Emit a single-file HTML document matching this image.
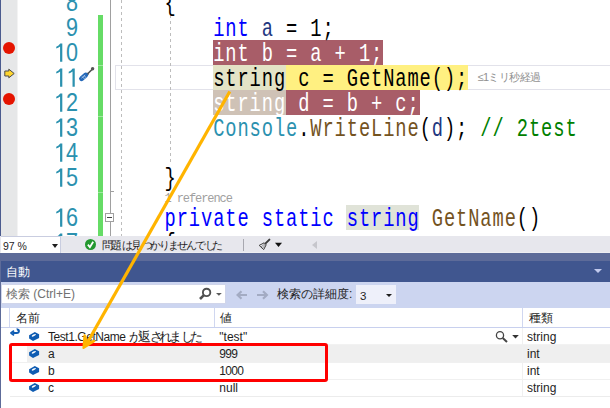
<!DOCTYPE html>
<html><head><meta charset="utf-8">
<style>
*{margin:0;padding:0;box-sizing:border-box}
html,body{width:610px;height:408px;overflow:hidden;background:#fff;position:relative;font-family:"Liberation Sans",sans-serif}
.a{position:absolute}
.one{display:inline-block;width:14.46px;height:26px;vertical-align:top}
.one svg{display:block}
.ln{position:absolute;left:20px;width:58px;text-align:right;color:#2b91af;font-size:26px;line-height:26px;height:25px;transform:scaleX(0.83);transform-origin:right}
.code{position:absolute;left:116px;font-family:"Liberation Mono",monospace;font-size:25px;letter-spacing:1.19px;line-height:29px;height:25px;white-space:pre;color:#000;transform:scaleX(0.75);transform-origin:0 0}
.kw{color:#0000ff}.var{color:#1f377f}.ty{color:#2b91af}.me{color:#74531f}.cm{color:#008000}
.hl{position:absolute;height:25px}
.ui{font-size:12px;line-height:17px;white-space:pre;color:#1e1e1e}
.row{position:absolute;left:10px;width:600px;height:17px;border-bottom:1px solid #f0f0f0}
.cube{position:absolute;left:29px;width:10px;height:9px}
</style></head><body>
<!-- editor -->
<div class="a" style="left:0;top:0;width:1px;height:236px;background:#4b5b8e"></div>
<div class="a" style="left:1px;top:0;width:16px;height:236px;background:#e6e7e8"></div><div class="a" style="left:17px;top:0;width:1px;height:236px;background:#f3f3f3"></div>

<div class="ln" style="top:-11px">8</div>
<div class="ln" style="top:14px">9</div>
<div class="ln" style="top:39px"><span class="one"><svg width="14.46" height="26" viewBox="0 0 14.46 26"><path d="M7.4 22.7V7.6Q5.2 9 2.8 9.6V7.8Q5.8 6.6 7.6 4.4H10.1V22.7Z" fill="#2b91af"/></svg></span>0</div>
<div class="ln" style="top:64px"><span class="one"><svg width="14.46" height="26" viewBox="0 0 14.46 26"><path d="M7.4 22.7V7.6Q5.2 9 2.8 9.6V7.8Q5.8 6.6 7.6 4.4H10.1V22.7Z" fill="#2b91af"/></svg></span><span class="one"><svg width="14.46" height="26" viewBox="0 0 14.46 26"><path d="M7.4 22.7V7.6Q5.2 9 2.8 9.6V7.8Q5.8 6.6 7.6 4.4H10.1V22.7Z" fill="#2b91af"/></svg></span></div>
<div class="ln" style="top:89px"><span class="one"><svg width="14.46" height="26" viewBox="0 0 14.46 26"><path d="M7.4 22.7V7.6Q5.2 9 2.8 9.6V7.8Q5.8 6.6 7.6 4.4H10.1V22.7Z" fill="#2b91af"/></svg></span>2</div>
<div class="ln" style="top:114px"><span class="one"><svg width="14.46" height="26" viewBox="0 0 14.46 26"><path d="M7.4 22.7V7.6Q5.2 9 2.8 9.6V7.8Q5.8 6.6 7.6 4.4H10.1V22.7Z" fill="#2b91af"/></svg></span>3</div>
<div class="ln" style="top:139px"><span class="one"><svg width="14.46" height="26" viewBox="0 0 14.46 26"><path d="M7.4 22.7V7.6Q5.2 9 2.8 9.6V7.8Q5.8 6.6 7.6 4.4H10.1V22.7Z" fill="#2b91af"/></svg></span>4</div>
<div class="ln" style="top:164px"><span class="one"><svg width="14.46" height="26" viewBox="0 0 14.46 26"><path d="M7.4 22.7V7.6Q5.2 9 2.8 9.6V7.8Q5.8 6.6 7.6 4.4H10.1V22.7Z" fill="#2b91af"/></svg></span>5</div>
<div class="ln" style="top:204px"><span class="one"><svg width="14.46" height="26" viewBox="0 0 14.46 26"><path d="M7.4 22.7V7.6Q5.2 9 2.8 9.6V7.8Q5.8 6.6 7.6 4.4H10.1V22.7Z" fill="#2b91af"/></svg></span>6</div>
<div class="ln" style="top:229px"><span class="one"><svg width="14.46" height="26" viewBox="0 0 14.46 26"><path d="M7.4 22.7V7.6Q5.2 9 2.8 9.6V7.8Q5.8 6.6 7.6 4.4H10.1V22.7Z" fill="#2b91af"/></svg></span>7</div>

<div class="a" style="left:98px;top:15px;width:5px;height:221px;background:#66dc66"></div><div class="a" style="left:98px;top:65px;width:5px;height:1px;background:#a0e8a0"></div><div class="a" style="left:98px;top:116px;width:5px;height:1px;background:#a0e8a0"></div><div class="a" style="left:98px;top:192px;width:5px;height:1px;background:#a0e8a0"></div>
<div class="a" style="left:110px;top:0;width:1px;height:213px;background:#a0a0a0"></div>
<div class="a" style="left:110px;top:191px;width:4px;height:1px;background:#a0a0a0"></div>
<div class="a" style="left:110px;top:222px;width:1px;height:14px;background:#a0a0a0"></div>
<div class="a" style="left:105px;top:213px;width:9px;height:9px;border:1px solid #a0a0a0;background:#fff"></div>
<div class="a" style="left:107px;top:217px;width:5px;height:1px;background:#444"></div>

<!-- current line box -->
<div class="a" style="left:115px;top:65px;width:495px;height:25px;border:1px solid #e2e2ea;border-right:none"></div>
<!-- indent guides -->
<div class="a" style="left:121px;top:0;width:1px;height:236px;background:repeating-linear-gradient(#bdbdbd 0 3px,transparent 3px 6px)"></div>
<div class="a" style="left:170px;top:15px;width:1px;height:150px;background:repeating-linear-gradient(#bdbdbd 0 3px,transparent 3px 6px)"></div>

<!-- highlights -->
<div class="hl" style="left:213px;top:40px;width:170px;background:#a85d68"></div>
<div class="hl" style="left:213px;top:65px;width:73px;background:#e3e3c6"></div>
<div class="hl" style="left:286px;top:65px;width:182px;background:#fff081"></div>
<div class="hl" style="left:213px;top:90px;width:73px;background:#cfc2b6"></div>
<div class="hl" style="left:286px;top:90px;width:134px;background:#a85d68"></div>
<div class="hl" style="left:346px;top:205px;width:73px;height:25px;background:#e0e3d8"></div>

<div class="code" style="top:-10px">    {</div>
<div class="code" style="top:15px">        <span class="kw">int</span> <span class="var">a</span> = 1;</div>
<div class="code" style="top:40px;color:#fff">        int b = a + 1;</div>
<div class="code" style="top:65px">        string c = GetName();</div>
<div class="code" style="top:90px;color:#fff">        string d = b + c;</div>
<div class="code" style="top:115px">        <span class="ty">Console</span>.<span class="me">WriteLine</span>(<span class="var">d</span>); <span class="cm">// 2test</span></div>
<div class="code" style="top:165px">    }</div>
<div class="a" style="left:164.5px;top:191.5px;font-family:'Liberation Mono',monospace;font-size:12px;letter-spacing:-1.08px;line-height:15px;color:#a0a0a0;white-space:pre">1 reference</div>
<div class="code" style="top:205px"><span class="kw">    private static string</span> <span class="me">GetName</span>()</div>
<div class="code" style="top:230px">    {</div>

<div class="a ui" style="left:477.5px;top:69px;font-size:11px;letter-spacing:-0.6px;color:#909090">≤1ミリ秒経過</div>

<!-- margin glyphs -->
<div class="a" style="left:3px;top:42px;width:12px;height:12px;border-radius:50%;background:#e51400"></div>
<div class="a" style="left:3px;top:93px;width:12px;height:12px;border-radius:50%;background:#e51400"></div>
<svg class="a" style="left:0;top:64px" width="20" height="20" viewBox="0 64 20 20"><path d="M4.8 71H8.8V69.2L14.2 73.5L8.8 77.8V76H4.8Z" fill="#ffd52e" stroke="#4a4a4a" stroke-width="1" stroke-linejoin="round"/></svg>
<svg class="a" style="left:78px;top:62px" width="22" height="22" viewBox="0 0 22 22"><path d="M9 12.5L15 6.5" stroke="#505050" stroke-width="1.6" stroke-linecap="round"/><path d="M7.8 13.4L10 11.4" stroke="#505050" stroke-width="2.6"/><circle cx="14.6" cy="6.8" r="1.7" fill="#555"/><path d="M3.6 16.6L7.6 13.2" stroke="#2468b8" stroke-width="5" stroke-linecap="round"/><path d="M4.2 14.6L6.6 17M5.8 13.4L8.1 15.6M3.4 16.2L7.2 13" stroke="#cfe0f5" stroke-width="0.7"/></svg>

<!-- status bar -->
<div class="a" style="left:0;top:236px;width:610px;height:17px;background:#e7e7ed;border-bottom:1px solid #eeeef2"></div>
<div class="a" style="left:1px;top:236px;width:60px;height:17px;background:#fff;border-top:1px solid #c9cde0;border-right:1px solid #c9cde0"></div>
<div class="a ui" style="left:3px;top:238px;font-size:10.5px;color:#1e1e1e">97 %</div>
<div class="a" style="left:52px;top:243.5px;width:0;height:0;border-left:3.5px solid transparent;border-right:3.5px solid transparent;border-top:4px solid #1e1e1e"></div>
<div class="a" style="left:85px;top:239px;width:11px;height:11px;border-radius:50%;background:#23982f"></div>
<svg class="a" style="left:85px;top:239px" width="11" height="11"><path d="M2.9 5.6L4.9 8.2L8.2 2.7" stroke="#fff" stroke-width="1.8" fill="none"/></svg>
<div class="a ui" style="left:101.5px;top:237px;font-size:10.5px"><span style="display:inline-block;width:9.4px">問</span><span style="display:inline-block;width:11.6px">題</span><span style="display:inline-block;width:8.4px">は</span><span style="display:inline-block;width:11.5px">見</span><span style="display:inline-block;width:7.4px">つ</span><span style="display:inline-block;width:9.4px">か</span><span style="display:inline-block;width:8.4px">り</span><span style="display:inline-block;width:9.4px">ま</span><span style="display:inline-block;width:9.5px">せ</span><span style="display:inline-block;width:8.4px">ん</span><span style="display:inline-block;width:10.4px">で</span><span style="display:inline-block;width:6.4px">し</span><span style="display:inline-block;width:7.3px">た</span></div>
<div class="a" style="left:243px;top:239px;width:1px;height:12px;background:#a8a8b0"></div>
<svg class="a" style="left:254px;top:236px" width="32" height="16" viewBox="0 0 32 16"><path d="M15.4 3.6L11.6 7.4" stroke="#3c3c3c" stroke-width="2" stroke-linecap="round"/><path d="M5.2 9.4L10.2 6.8L12.2 8.8L9.7 13.6Z" fill="none" stroke="#3c3c3c" stroke-width="1" stroke-linejoin="round"/><path d="M7 10.9L11 7.9M8.4 12.3L11.6 8.7" stroke="#6a6a6a" stroke-width="0.7"/><path d="M21 6.8H28L24.5 11Z" fill="#111"/></svg>
<div class="a" style="left:312px;top:240.5px;width:0;height:0;border-top:4px solid transparent;border-bottom:4px solid transparent;border-right:5px solid #c6c6cc"></div>

<!-- panel -->
<div class="a" style="left:0;top:253px;width:610px;height:8px;background:#5d6b99"></div>
<div class="a" style="left:0;top:253px;width:1px;height:155px;background:#5d6b99"></div>
<div class="a" style="left:1px;top:261px;width:609px;height:21px;background:#40568f"></div>
<div class="a ui" style="left:6px;top:263.5px;color:#fff;font-size:12px">自動</div>
<div class="a" style="left:594px;top:269px;width:0;height:0;border-left:4px solid transparent;border-right:4px solid transparent;border-top:4px solid #c2caee"></div>

<div class="a" style="left:1px;top:282px;width:609px;height:26px;background:#ccd5f0"></div>
<div class="a" style="left:1px;top:284px;width:225px;height:20px;background:#fff;border:1px solid #d0d5ea"></div>
<div class="a ui" style="left:6px;top:286px;color:#717171">検索 (Ctrl+E)</div>
<svg class="a" style="left:194px;top:284px" width="32" height="20" viewBox="0 0 32 20"><circle cx="12.6" cy="8.4" r="3.7" stroke="#505050" stroke-width="1.9" fill="none"/><path d="M9.9 11.1L6 15" stroke="#505050" stroke-width="2.6"/><path d="M22 9H27.8L24.9 11.8Z" fill="#5a5a5a"/></svg>
<svg class="a" style="left:230px;top:284px" width="44" height="22" viewBox="0 0 44 22"><path d="M17 11H8M11.5 7.2L7.6 11L11.5 14.8" stroke="#a3abc3" stroke-width="2.2" fill="none"/><path d="M27 11H36.5M33 7.2L36.9 11L33 14.8" stroke="#a3abc3" stroke-width="2.2" fill="none"/></svg>
<div class="a ui" style="left:277px;top:286px">検索の詳細度:</div>
<div class="a" style="left:356px;top:285px;width:40px;height:19px;background:#eef0fa"></div>
<div class="a ui" style="left:360px;top:287.5px;font-size:11.5px">3</div>
<div class="a" style="left:386px;top:294px;width:0;height:0;border-left:3px solid transparent;border-right:3px solid transparent;border-top:3px solid #1e1e1e"></div>

<!-- header -->
<div class="a" style="left:1px;top:308px;width:609px;height:20px;background:#fff;border-bottom:1px solid #c8d0ee"></div>
<div class="a" style="left:9px;top:308px;width:1px;height:19px;background:#d0d7f0"></div>
<div class="a" style="left:214px;top:308px;width:1px;height:19px;background:#d0d7f0"></div>
<div class="a" style="left:522px;top:308px;width:1px;height:19px;background:#d0d7f0"></div>
<div class="a ui" style="left:15.5px;top:310px;font-size:11.5px">名前</div>
<div class="a ui" style="left:220px;top:310px;font-size:11.5px">値</div>
<div class="a ui" style="left:528.5px;top:310px;font-size:11.5px">種類</div>

<!-- rows -->
<div class="a" style="left:10px;top:344px;width:600px;height:1px;background:#f2f2f2"></div>
<div class="a" style="left:27px;top:345px;width:583px;height:17px;background:#efefef"></div>
<div class="a" style="left:10px;top:362px;width:600px;height:1px;background:#f0f0f0"></div>
<div class="a" style="left:10px;top:379px;width:600px;height:1px;background:#f0f0f0"></div>
<div class="a" style="left:10px;top:396px;width:600px;height:1px;background:#ececec"></div>
<div class="a" style="left:522px;top:328px;width:1px;height:68px;background:#f0f0f0"></div>
<svg class="a" style="left:9px;top:327px" width="12" height="10" viewBox="0 0 12 10"><path d="M3.5 6H7.5Q10 6 10 4Q10 2.6 8 2.4" stroke="#0f5cb2" stroke-width="1.8" fill="none"/><path d="M5 3.6L2 6L5 8.4" stroke="#0f5cb2" stroke-width="1.8" fill="none" stroke-linejoin="round"/><path d="M7.3 1.3L9.6 2.2 8.2 4z" fill="#0f5cb2"/></svg>
<svg class="a" style="left:28px;top:331px" width="12" height="11" viewBox="0 0 12 11"><path d="M1.1 4.2L6.8 1 11.1 3.3V6.9L5 10 1.1 7.6Z" fill="#0f5cb2"/><ellipse cx="5.8" cy="4.3" rx="2.3" ry="0.9" transform="rotate(-25 5.8 4.3)" fill="#fff"/></svg>
<svg class="a" style="left:28px;top:348px" width="12" height="11" viewBox="0 0 12 11"><path d="M1.1 4.2L6.8 1 11.1 3.3V6.9L5 10 1.1 7.6Z" fill="#0f5cb2"/><ellipse cx="5.8" cy="4.3" rx="2.3" ry="0.9" transform="rotate(-25 5.8 4.3)" fill="#fff"/></svg>
<svg class="a" style="left:28px;top:365px" width="12" height="11" viewBox="0 0 12 11"><path d="M1.1 4.2L6.8 1 11.1 3.3V6.9L5 10 1.1 7.6Z" fill="#0f5cb2"/><ellipse cx="5.8" cy="4.3" rx="2.3" ry="0.9" transform="rotate(-25 5.8 4.3)" fill="#fff"/></svg>
<svg class="a" style="left:28px;top:382px" width="12" height="11" viewBox="0 0 12 11"><path d="M1.1 4.2L6.8 1 11.1 3.3V6.9L5 10 1.1 7.6Z" fill="#0f5cb2"/><ellipse cx="5.8" cy="4.3" rx="2.3" ry="0.9" transform="rotate(-25 5.8 4.3)" fill="#fff"/></svg>
<div class="a ui" style="left:48px;top:329px"><span style="letter-spacing:-0.45px">Test1.GetName</span><span style="position:absolute;left:80.5px;top:-1.5px;font-size:13px;white-space:nowrap"><span style="display:inline-block;width:9.6px">が</span><span style="display:inline-block;width:11.7px">返</span><span style="display:inline-block;width:9px">さ</span><span style="display:inline-block;width:10.3px">れ</span><span style="display:inline-block;width:11.7px">ま</span><span style="display:inline-block;width:9px">し</span><span style="display:inline-block;width:10.3px">た</span></span></div>
<div class="a ui" style="left:219.3px;top:329px">"test"</div>
<div class="a ui" style="left:527px;top:329px">string</div>
<div class="a ui" style="left:48px;top:346px">a</div>
<div class="a ui" style="left:219.3px;top:346px;letter-spacing:-0.75px">999</div>
<div class="a ui" style="left:527px;top:346px">int</div>
<div class="a ui" style="left:48px;top:363px">b</div>
<div class="a ui" style="left:219.3px;top:363px;letter-spacing:-0.65px">1000</div>
<div class="a ui" style="left:527px;top:363px">int</div>
<div class="a ui" style="left:48px;top:380px">c</div>
<div class="a ui" style="left:219.3px;top:380px">null</div>
<div class="a ui" style="left:527px;top:380px">string</div>
<svg class="a" style="left:490px;top:328px" width="32" height="18" viewBox="0 0 32 18"><circle cx="10" cy="7.2" r="3.6" stroke="#444" stroke-width="1.3" fill="none"/><path d="M12.7 10L17 14" stroke="#444" stroke-width="2"/><path d="M22.2 7H28.8L25.5 10.4Z" fill="#333"/></svg>

<!-- red rect -->
<div class="a" style="left:9px;top:343px;width:319px;height:39px;border:3px solid #ff0000;border-radius:3px"></div>

<!-- orange arrow -->
<svg class="a" style="left:0;top:0" width="610" height="408"><g stroke="#ffb400" fill="none"><path d="M229.8 91.5L86 345" stroke-width="3.2"/><path d="M84.6 335.5L83.6 347.8L94.3 341L87.2 343Z" fill="#ffb400" stroke-width="2.4" stroke-linejoin="round"/></g></svg>
</body></html>
